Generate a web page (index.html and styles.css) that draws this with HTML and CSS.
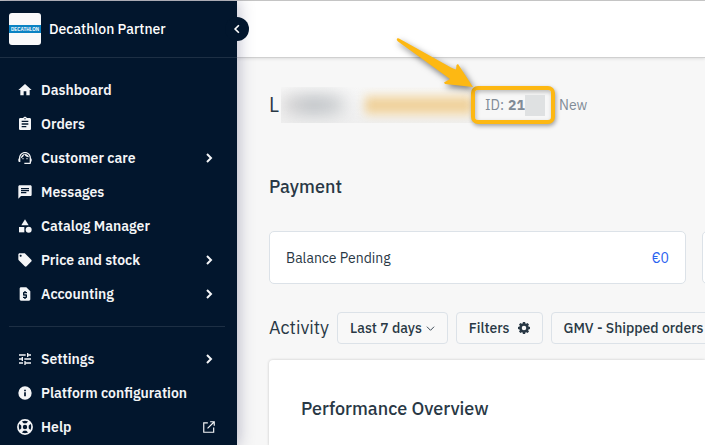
FILE: index.html
```html
<!DOCTYPE html>
<html lang="en">
<head>
<meta charset="utf-8">
<title>Decathlon Partner</title>
<link rel="stylesheet" href="styles.css">
</head>
<body>
<div class="app">
  <aside class="sidebar">
    <header class="brand">
      <svg class="brand-logo" viewBox="0 0 64 64" role="img" aria-label="Decathlon">
        <rect width="64" height="64" rx="6" fill="#f9f9fa"/>
        <rect y="24" width="64" height="16" fill="#0a82c3"/>
        <text x="32" y="36" text-anchor="middle" class="logo-text">DECATHLON</text>
      </svg>
      <span class="brand-name">Decathlon Partner</span>
      <button class="collapse" aria-label="Collapse menu"><svg viewBox="0 0 24 24" width="18" height="18"><path d="M14.500 7l-5 5 5 5" fill="none" stroke="currentColor" stroke-width="2.200"/></svg></button>
    </header>
    <nav class="nav">
      <a class="item" href="#"><svg class="icon" viewBox="0 0 24 24"><path d="M10 20v-6h4v6h5v-8h3L12 3 2 12h3v8z"/></svg><span>Dashboard</span></a>
      <a class="item" href="#"><svg class="icon" viewBox="0 0 24 24"><path d="M19 3h-4.180C14.400 1.840 13.300 1 12 1c-1.300 0-2.400.84-2.820 2H5c-1.100 0-2 .9-2 2v14c0 1.100.9 2 2 2h14c1.100 0 2-.9 2-2V5c0-1.100-.9-2-2-2zm-7 0c.55 0 1 .45 1 1s-.45 1-1 1-1-.45-1-1 .45-1 1-1zm2 14H7v-2h7v2zm3-4H7v-2h10v2zm0-4H7V7h10v2z"/></svg><span>Orders</span></a>
      <a class="item" href="#"><svg class="icon" viewBox="0 0 24 24"><path d="M21 12.220C21 6.730 16.740 3 12 3c-4.690 0-9 3.650-9 9.280-.6.340-1 .98-1 1.720v2c0 1.100.9 2 2 2h1v-6.100c0-3.870 3.130-7 7-7s7 3.130 7 7V19h-8v2h8c1.100 0 2-.9 2-2v-1.220c.59-.31 1-.92 1-1.640v-2.300c0-.7-.41-1.310-1-1.620z"/><circle cx="9" cy="13" r="1"/><circle cx="15" cy="13" r="1"/><path d="M18 11.030C17.520 8.180 15.040 6 12.050 6c-3.030 0-6.290 2.510-6.030 6.450 2.470-1.010 4.330-3.210 4.860-5.890 1.310 2.630 4 4.440 7.120 4.470z"/></svg><span>Customer care</span><svg class="chevron" viewBox="0 0 12 12"><path d="M4 2l4 4-4 4"/></svg></a>
      <a class="item" href="#"><svg class="icon" viewBox="0 0 24 24"><path d="M20 2H4c-1.100 0-2 .9-2 2v18l4-4h14c1.100 0 2-.9 2-2V4c0-1.100-.9-2-2-2zM6 9h12v2H6V9zm8 5H6v-2h8v2zm4-6H6V6h12v2z"/></svg><span>Messages</span></a>
      <a class="item" href="#"><svg class="icon" viewBox="0 0 24 24"><path d="M12 2l-5.500 9h11z"/><circle cx="17.500" cy="17.500" r="4.500"/><path d="M3 13.500h8v8H3z"/></svg><span>Catalog Manager</span></a>
      <a class="item" href="#"><svg class="icon" viewBox="0 0 24 24"><path d="M21.410 11.580l-9-9C12.050 2.220 11.550 2 11 2H4c-1.100 0-2 .9-2 2v7c0 .55.220 1.050.59 1.420l9 9c.36.360.86.580 1.410.58.550 0 1.050-.22 1.410-.59l7-7c.37-.36.590-.86.590-1.410 0-.55-.23-1.060-.59-1.420zM5.500 7C4.670 7 4 6.330 4 5.500S4.670 4 5.500 4 7 4.670 7 5.500 6.330 7 5.500 7z"/></svg><span>Price and stock</span><svg class="chevron" viewBox="0 0 12 12"><path d="M4 2l4 4-4 4"/></svg></a>
      <a class="item" href="#"><svg class="icon" viewBox="0 0 24 24"><path d="M14 2H6c-1.100 0-2 .9-2 2v16c0 1.100.89 2 1.990 2H18c1.100 0 2-.9 2-2V8l-6-6zm1 9h-4v1.500h3c.55 0 1 .45 1 1V17c0 .55-.45 1-1 1h-1v1.500h-2V18H9v-2h4v-1.500h-3c-.55 0-1-.45-1-1V10c0-.55.450-1 1-1h1V7.500h2V9h2v2z"/></svg><span>Accounting</span><svg class="chevron" viewBox="0 0 12 12"><path d="M4 2l4 4-4 4"/></svg></a>
    </nav>
    <nav class="nav nav-secondary">
      <a class="item" href="#"><svg class="icon" viewBox="0 0 24 24"><path d="M3 17v2h6v-2H3zM3 5v2h10V5H3zm10 16v-2h8v-2h-8v-2h-2v6h2zM7 9v2H3v2h4v2h2V9H7zm14 4v-2H11v2h10zm-6-4h2V7h4V5h-4V3h-2v6z"/></svg><span>Settings</span><svg class="chevron" viewBox="0 0 12 12"><path d="M4 2l4 4-4 4"/></svg></a>
      <a class="item" href="#"><svg class="icon" viewBox="0 0 24 24"><path d="M12 2a10 10 0 1 0 0 20 10 10 0 0 0 0-20zm1.300 15h-2.600v-6h2.600v6zm0-7.500h-2.600V7h2.600v2.500z"/></svg><span>Platform configuration</span></a>
      <a class="item" href="#"><svg class="icon" viewBox="0 0 24 24"><g fill="none" stroke="currentColor"><circle cx="12" cy="12" r="10.600" stroke-width="2.600"/><circle cx="12" cy="12" r="4.500" stroke-width="2.400"/><path d="M4.500 4.500l4.300 4.300M15.200 15.200l4.300 4.300M19.500 4.500l-4.300 4.300M8.800 15.200l-4.300 4.300" stroke-width="5"/></g></svg><span>Help</span><svg class="external" viewBox="0 0 24 24"><path d="M19 20H4V6h6V4H2v18h19v-9h-2v7zM14 2v2h4.600l-9.800 9.800 1.400 1.400L20 5.400V10h2V2z"/></svg></a>
    </nav>
  </aside>
  <div class="content">
    <div class="topbar"></div>
    <main class="main">
      <div class="seller">
        <h1 class="seller-name">L</h1>
        <span class="redacted"><span class="smudge"></span><span class="smudge-status"></span></span>
        <span class="seller-id">ID: <b>21</b><span class="mask"></span>
          <svg class="arrow" viewBox="0 0 90 60" aria-hidden="true"><path d="M7 7.500Q6 9 8 10.500L60 48 54 51.500 55 53 83 56 68 33 66.500 34 66 38.500Q64 38 61 36.500L9 7.500Q8 7 7 7.500z"/></svg>
        </span>
        <span class="seller-tag">New</span>
      </div>
      <h2 class="title payment-title">Payment</h2>
      <div class="cards">
        <section class="card"><span>Balance Pending</span><span class="amount">€0</span></section>
        <section class="card"></section>
      </div>
      <div class="activity">
        <h2 class="activity-title">Activity</h2>
        <button class="btn">Last 7 days<svg class="caret" viewBox="0 0 10 10"><path d="M1 3l4 4 4-4"/></svg></button>
        <button class="btn filters">Filters<svg class="gear" viewBox="0 0 24 24"><path fill-rule="evenodd" d="M9.800 0h4.400l.6 3 1.600.700L19 2l3 3-1.700 2.600.7 1.600 3 .6v4.400l-3 .6-.7 1.600L22 19l-3 3-2.600-1.700-1.600.7-.6 3H9.800l-.6-3-1.600-.7L5 22l-3-3 1.700-2.600-.7-1.600-3-.6v-4.400l3-.6.700-1.600L2 5l3-3 2.600 1.700L9.200 3zM12 7.500a4.500 4.500 0 1 0 0 9 4.500 4.500 0 0 0 0-9z"/></svg></button>
        <button class="btn">GMV - Shipped orders</button>
      </div>
      <section class="panel"><h2 class="title">Performance Overview</h2></section>
    </main>
  </div>
</div>
</body>
</html>
```
FILE: styles.css
```css
* { box-sizing: border-box; }
body {
  margin: 0;
  overflow: hidden;
  background: #f7f7f7;
  color: #293845;
  font: 14px/20px "IBM Plex Sans", Roboto, sans-serif;
}
h1, h2 { margin: 0; }
.app {
  display: flex;
  min-height: 100vh;
  border-top: 1px solid #c8c8c8;
}
.sidebar {
  position: relative;
  z-index: 1;
  flex: 0 0 237px;
  background: #02162d;
  color: #fff;
  box-shadow: 0 0 16px rgba(30, 30, 80, .35);
}
.brand {
  position: relative;
  display: flex;
  align-items: center;
  gap: 8px;
  height: 57px;
  padding: 0 9px;
  border-bottom: 1px solid #1d2f44;
}
.brand-logo { width: 32px; height: 32px; }
.logo-text { font: bold 9px "Liberation Sans", sans-serif; fill: #fff; }
.brand-name { font-weight: 500; }
.collapse {
  position: absolute;
  right: -12px;
  top: 16px;
  display: grid;
  place-items: center;
  width: 24px;
  height: 24px;
  padding: 0;
  border: 0;
  border-radius: 50%;
  background: #02162d;
  color: #fff;
}
.nav { padding: 15px 17px; }
.nav-secondary {
  margin: 0 12px 0 9px;
  padding: 15px 5px 0 8px;
  border-top: 1px solid #1d2f44;
}
.item {
  display: flex;
  align-items: center;
  gap: 8px;
  height: 34px;
  color: #f4f5f7;
  font-weight: 600;
  text-decoration: none;
}
.icon { width: 16px; height: 16px; fill: currentColor; }
.chevron {
  width: 12px;
  height: 12px;
  margin: 0 5px 0 auto;
  fill: none;
  stroke: currentColor;
  stroke-width: 2;
}
.external { width: 14px; height: 14px; margin: 0 4px 0 auto; fill: currentColor; }
.content { flex: 1; min-width: 0; }
.topbar {
  height: 57px;
  background: #fff;
  border-bottom: 1px solid #d0d0d0;
  box-shadow: 0 1px 3px rgba(0, 0, 0, .1);
}
.main { padding: 28px 0 0 32px; }
.seller { display: flex; align-items: center; height: 38px; color: #808b96; }
.seller-name {
  flex: 0 0 12px;
  color: #293845;
  font-size: 20px;
  line-height: 28px;
  font-weight: 400;
}
.redacted {
  display: flex;
  align-items: center;
  gap: 20px;
  width: 192px;
  height: 36px;
  overflow: hidden;
  background: linear-gradient(#f7f7f7, #efefef);
}
.smudge {
  width: 64px;
  height: 20px;
  border-radius: 10px;
  background: linear-gradient(90deg, #dcd9d9, #bcc0c4, #d2d4d6);
  filter: blur(8px);
}
.smudge-status {
  flex: 1;
  height: 20px;
  background: linear-gradient(#f9e6c0, #ebca90, #f9e2b6);
  filter: blur(5px);
}
.seller-id {
  position: relative;
  display: flex;
  align-items: center;
  gap: 4px;
  width: 84px;
  height: 38px;
  margin-left: -2px;
  padding-left: 10px;
  border: 4px solid #fdb813;
  border-radius: 7px;
  background: #f7f7f7;
  box-shadow: 1px 2px 4px rgba(0, 0, 0, .35), inset 1px 2px 4px rgba(0, 0, 0, .25);
}
.mask { width: 20px; height: 21px; margin-left: -4px; background: #dfe1e2; }
.arrow {
  position: absolute;
  right: 71px;
  bottom: 29px;
  width: 90px;
  height: 60px;
  fill: #fdb813;
  filter: drop-shadow(2px 3px 3px rgba(0, 0, 0, .5));
}
.seller-tag { margin-left: 4px; }
.title { font-size: 18px; line-height: 24px; font-weight: 500; }
.payment-title { margin: 51px 0 32px; }
.cards { display: flex; gap: 16px; }
.card {
  display: flex;
  flex: 0 0 calc(100% - 19px);
  align-items: center;
  justify-content: space-between;
  height: 53px;
  padding: 0 16px;
  background: #fff;
  border: 1px solid #dce2e8;
  border-radius: 5px;
}
.amount { color: #2a62f0; }
.activity {
  display: flex;
  align-items: center;
  gap: 8px;
  margin: 28px 0 16px;
}
.activity-title { font-size: 18px; line-height: 24px; font-weight: 400; }
.btn {
  display: flex;
  flex: none;
  align-items: center;
  gap: 4px;
  height: 32px;
  padding: 0 12px;
  border: 1px solid #dce2e8;
  border-radius: 4px;
  background: #f8f8f8;
  color: inherit;
  font: inherit;
  font-weight: 500;
}
.filters { gap: 8px; }
.caret { width: 9px; height: 9px; fill: none; stroke: currentColor; }
.gear { width: 12px; height: 12px; fill: currentColor; }
.panel {
  min-height: 86px;
  padding: 37px 32px 24px;
  background: #fff;
  border-radius: 4px 0 0 0;
  box-shadow: 0 0 3px rgba(0, 0, 0, .2);
}
```
